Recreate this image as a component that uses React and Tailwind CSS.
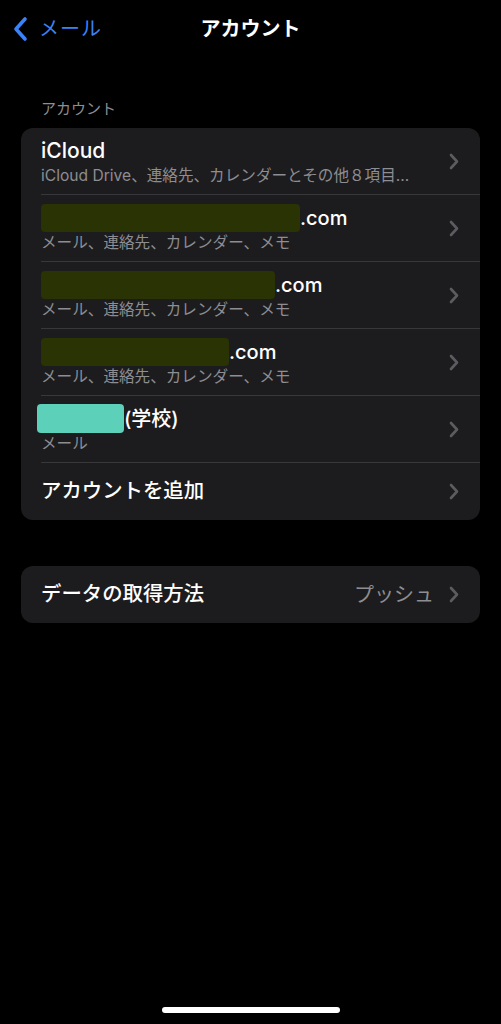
import React from "react";

const accounts = [
  { title: "iCloud", big: true, sub: "iCloud Drive、連絡先、カレンダーとその他８項目…" },
  { blur: "w-[259px]", title: ".com", sub: "メール、連絡先、カレンダー、メモ" },
  { blur: "w-[234px]", title: ".com", sub: "メール、連絡先、カレンダー、メモ" },
  { blur: "w-[188px]", title: ".com", sub: "メール、連絡先、カレンダー、メモ" },
  { teal: true, title: "(学校)", sub: "メール" },
];

function Chevron() {
  return (
    <svg width="10" height="17" viewBox="0 0 10 17" className="shrink-0">
      <path d="M2 2 L8 8.5 L2 15" fill="none" stroke="#5b5b60" strokeWidth="2.6" strokeLinecap="round" strokeLinejoin="round" />
    </svg>
  );
}

export default function App() {
  return (
    <div
      className="w-[501px] h-[1024px] bg-black text-white relative overflow-hidden"
      style={{ fontFamily: '"Inter", "Noto Sans CJK JP", sans-serif' }}
    >
      {/* nav bar */}
      <div className="h-[58px] flex items-center relative">
        <div className="flex items-center pl-[12px]">
          <svg width="18" height="26" viewBox="0 0 18 26">
            <path d="M13 3 L4 13 L13 23" fill="none" stroke="#3a82f7" strokeWidth="3.6" strokeLinecap="round" strokeLinejoin="round" />
          </svg>
          <span className="ml-[9px] text-[20px] text-[#3a82f7] tracking-[1px]">メール</span>
        </div>
        <div className="absolute left-0 right-0 text-center text-[20px] font-bold pointer-events-none">アカウント</div>
      </div>

      <div className="pt-[43px] pl-[41px] text-[15px] text-[#8d8d92] leading-none">アカウント</div>

      <div className="mx-[21px] mt-[12px] bg-[#1c1c1e] rounded-[12px] overflow-hidden">
        {accounts.map((a, i) => (
          <div key={i} className="pl-[20px] h-[67px]">
            <div className="h-full flex items-center border-b border-[#38383a] pr-[21px]">
              <div className="flex-1 flex flex-col justify-center">
                <div className="flex items-center h-[28px]">
                  {a.blur && <div className={`${a.blur} h-[28px] rounded-[4px] bg-[#2a3303]`}></div>}
                  {a.teal && <div className="w-[87px] h-[29px] -ml-[4px] rounded-[4px] bg-[#5dd0b9]"></div>}
                  <span className={`${a.big ? "text-[21px]" : "text-[20px]"} font-medium leading-none`}>{a.title}</span>
                </div>
                <div className="text-[15.6px] text-[#8d8d92] leading-[21px] whitespace-nowrap">{a.sub}</div>
              </div>
              <Chevron />
            </div>
          </div>
        ))}
        <div className="pl-[20px] pr-[21px] h-[57px] flex items-center">
          <span className="flex-1 text-[20.4px] font-medium">アカウントを追加</span>
          <Chevron />
        </div>
      </div>

      <div className="mx-[21px] mt-[46px] bg-[#1c1c1e] rounded-[12px] h-[57px] pl-[20px] pr-[21px] flex items-center">
        <span className="flex-1 text-[20.4px] font-medium">データの取得方法</span>
        <span className="text-[20px] text-[#8d8d92] mr-[15px]">プッシュ</span>
        <Chevron />
      </div>

      <div className="absolute bottom-[11px] left-[162px] w-[178px] h-[6px] rounded-full bg-white"></div>
    </div>
  );
}
